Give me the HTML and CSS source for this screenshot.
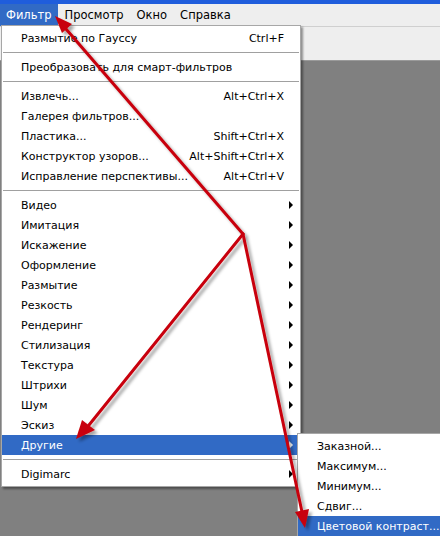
FILE: index.html
```html
<!DOCTYPE html>
<html lang="ru">
<head>
  <meta charset="UTF-8" />
  <title>Фильтр</title>
  <link rel="stylesheet" href="styles.css">
</head>
<body>

<div class="titlebar"></div>

<div class="menubar">
  <span class="top-item active">Фильтр</span>
  <span class="top-item">Просмотр</span>
  <span class="top-item">Окно</span>
  <span class="top-item">Справка</span>
</div>

<div class="workspace">
  <div class="options-bar"></div>
  <div class="canvas-area"></div>

  <div class="menu">
    <div class="row"><span class="label">Размытие по Гауссу</span><span class="key">Ctrl+F</span><span class="arrow"></span></div>
    <div class="sep"></div>
    <div class="row"><span class="label">Преобразовать для смарт-фильтров</span><span class="arrow"></span></div>
    <div class="sep"></div>
    <div class="row"><span class="label">Извлечь...</span><span class="key">Alt+Ctrl+X</span><span class="arrow"></span></div>
    <div class="row"><span class="label">Галерея фильтров...</span><span class="arrow"></span></div>
    <div class="row"><span class="label">Пластика...</span><span class="key">Shift+Ctrl+X</span><span class="arrow"></span></div>
    <div class="row"><span class="label">Конструктор узоров...</span><span class="key">Alt+Shift+Ctrl+X</span><span class="arrow"></span></div>
    <div class="row"><span class="label">Исправление перспективы...</span><span class="key">Alt+Ctrl+V</span><span class="arrow"></span></div>
    <div class="sep"></div>
    <div class="row sub"><span class="label">Видео</span><span class="arrow"></span></div>
    <div class="row sub"><span class="label">Имитация</span><span class="arrow"></span></div>
    <div class="row sub"><span class="label">Искажение</span><span class="arrow"></span></div>
    <div class="row sub"><span class="label">Оформление</span><span class="arrow"></span></div>
    <div class="row sub"><span class="label">Размытие</span><span class="arrow"></span></div>
    <div class="row sub"><span class="label">Резкость</span><span class="arrow"></span></div>
    <div class="row sub"><span class="label">Рендеринг</span><span class="arrow"></span></div>
    <div class="row sub"><span class="label">Стилизация</span><span class="arrow"></span></div>
    <div class="row sub"><span class="label">Текстура</span><span class="arrow"></span></div>
    <div class="row sub"><span class="label">Штрихи</span><span class="arrow"></span></div>
    <div class="row sub"><span class="label">Шум</span><span class="arrow"></span></div>
    <div class="row sub"><span class="label">Эскиз</span><span class="arrow"></span></div>
    <div class="row sub selected"><span class="label">Другие</span><span class="arrow"></span></div>
    <div class="sep"></div>
    <div class="row sub"><span class="label">Digimarc</span><span class="arrow"></span></div>
  </div>

  <div class="menu submenu">
    <div class="row"><span class="label">Заказной...</span></div>
    <div class="row"><span class="label">Максимум...</span></div>
    <div class="row"><span class="label">Минимум...</span></div>
    <div class="row"><span class="label">Сдвиг...</span></div>
    <div class="row selected"><span class="label">Цветовой контраст...</span></div>
  </div>
</div>

<!-- red pointer arrows drawn over the screenshot -->
<svg class="pointers" width="440" height="536" viewBox="0 0 440 536">
  <defs>
    <filter id="shade" x="-20%" y="-20%" width="140%" height="140%">
      <feDropShadow dx="3" dy="3" stdDeviation="1.6" flood-color="#000" flood-opacity="0.35"/>
    </filter>
  </defs>
  <g filter="url(#shade)" fill="#c8000a" stroke="#c8000a" stroke-width="3" stroke-linecap="round">
    <line x1="243" y1="234" x2="66" y2="29"/>
    <polygon stroke="none" points="55,16 72,24 62,33"/>
    <line x1="243" y1="234" x2="89" y2="425"/>
    <polygon stroke="none" points="76,439 82,420 95,430"/>
    <line x1="243" y1="234" x2="302" y2="512"/>
    <polygon stroke="none" points="305,528 295,512 309,509"/>
  </g>
</svg>

</body>
</html>
```

FILE: styles.css
```css
body {
  margin: 0;
  width: 440px;
  height: 536px;
  overflow: hidden;
  position: relative;
  font-family: "DejaVu Sans", Verdana, sans-serif;
  font-size: 11px;
  color: #000;
  background: #808080;
}
.titlebar {
  height: 4px;
  background: #1f5ddc;
}
.menubar {
  display: flex;
  height: 22px;
  background: #eeeeee;
  border-bottom: 1px solid #cfcfcf;
}
.top-item {
  padding: 0 6px;
  margin-right: 1px;
  line-height: 22px;
  font-size: 11.5px;
}
.top-item.active {
  background: #316ac5;
  color: #fff;
}
.workspace {
  position: relative;
  height: 509px;
}
.options-bar {
  height: 33px;
  background: #eeeeee;
  border-bottom: 1px solid #9a9a9a;
}
.canvas-area {
  height: 475px;
  background: #808080;
}
.menu {
  position: absolute;
  left: 1px;
  top: -2px;
  width: 298px;
  padding: 2px 0;
  background: #fff;
  border: 1px solid #a7a7a7;
  box-shadow: 2px 2px 2px rgba(0, 0, 0, 0.4);
}
.row {
  display: flex;
  align-items: center;
  height: 20px;
  padding-left: 19px;
  white-space: nowrap;
}
.label {
  flex: 1;
}
.key {
  text-align: right;
}
.arrow {
  width: 16px;
  height: 20px;
  position: relative;
}
.sub .arrow::after {
  content: "";
  position: absolute;
  left: 5px;
  top: 6px;
  border-left: 4px solid #000;
  border-top: 4px solid transparent;
  border-bottom: 4px solid transparent;
}
.selected {
  background: #316ac5;
  color: #fff;
}
.sub.selected .arrow::after {
  border-left-color: #fff;
}
.sep {
  height: 1px;
  margin: 4px 1px;
  background: #a0a0a0;
}
.submenu {
  left: 297px;
  top: 406px;
  width: 160px;
}
.pointers {
  position: absolute;
  left: 0;
  top: 0;
  pointer-events: none;
}
```
